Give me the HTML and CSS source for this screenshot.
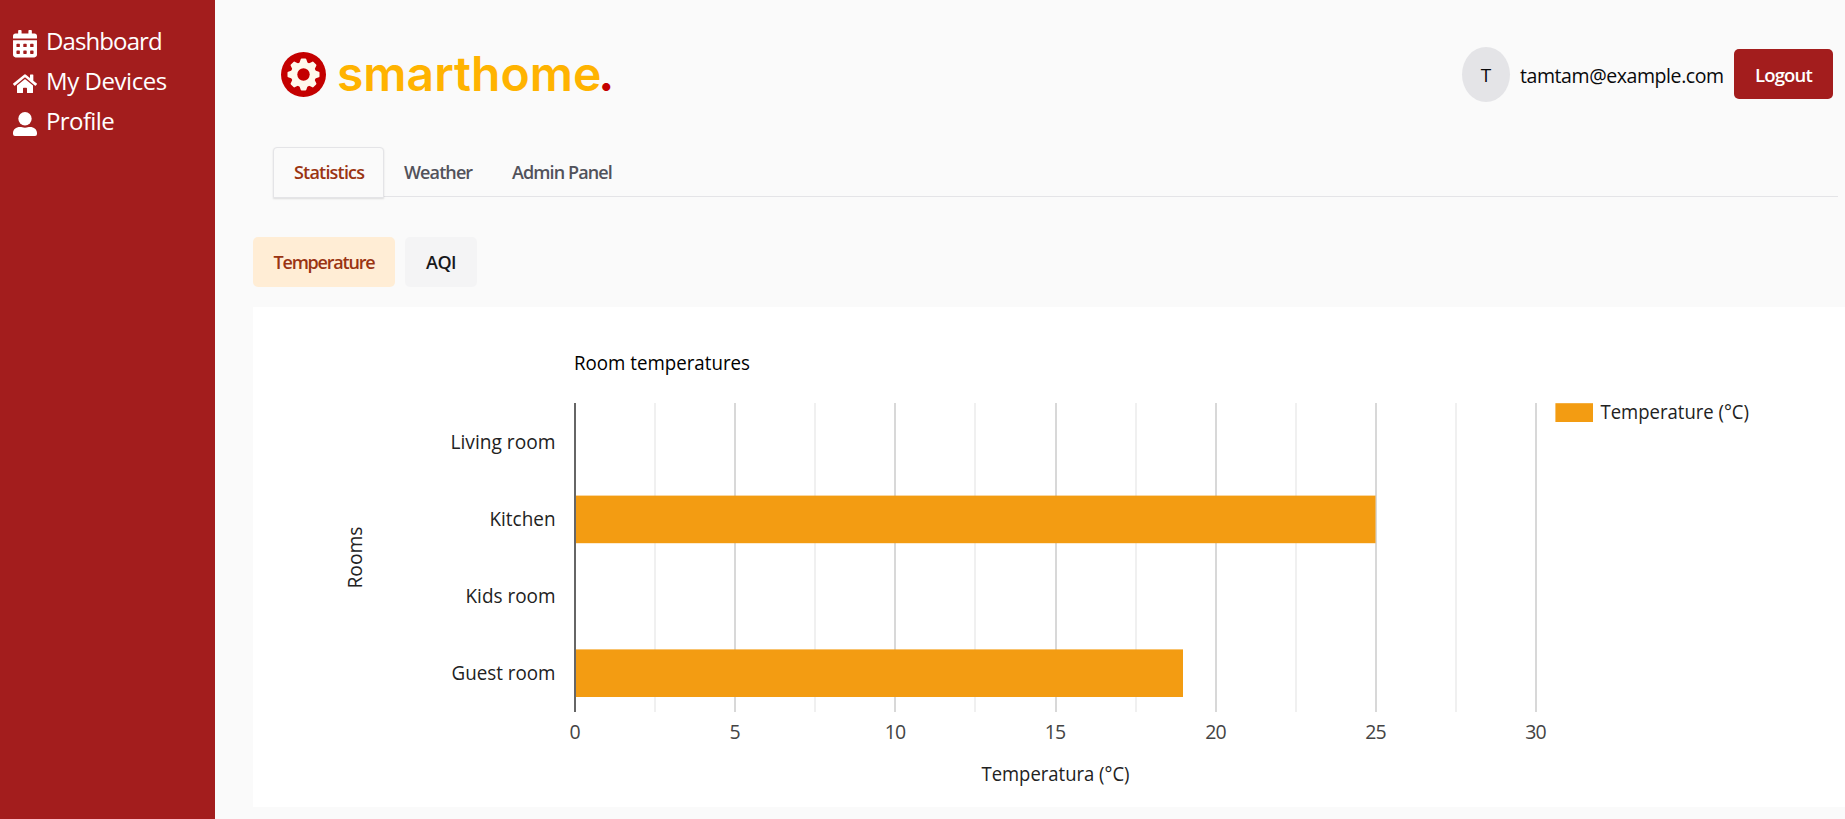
FILE: index.html
```html
<!DOCTYPE html>
<html lang="en">
<head>
<meta charset="utf-8">
<title>smarthome.</title>
<link rel="stylesheet" href="styles.css">
</head>
<body>
<div class="app">
  <nav class="sidebar">
    <a class="nav-item"><svg class="icon icon-calendar" viewBox="0 0 448 512"><path fill-rule="evenodd" d="M0 464c0 26.500 21.500 48 48 48h352c26.500 0 48-21.500 48-48V192H0zM320 268a12 12 0 0 1 12-12h40a12 12 0 0 1 12 12v40a12 12 0 0 1-12 12h-40a12 12 0 0 1-12-12zM320 396a12 12 0 0 1 12-12h40a12 12 0 0 1 12 12v40a12 12 0 0 1-12 12h-40a12 12 0 0 1-12-12zM192 268a12 12 0 0 1 12-12h40a12 12 0 0 1 12 12v40a12 12 0 0 1-12 12h-40a12 12 0 0 1-12-12zM192 396a12 12 0 0 1 12-12h40a12 12 0 0 1 12 12v40a12 12 0 0 1-12 12h-40a12 12 0 0 1-12-12zM64 268a12 12 0 0 1 12-12h40a12 12 0 0 1 12 12v40a12 12 0 0 1-12 12H76a12 12 0 0 1-12-12zM64 396a12 12 0 0 1 12-12h40a12 12 0 0 1 12 12v40a12 12 0 0 1-12 12H76a12 12 0 0 1-12-12zM400 64h-48V16a16 16 0 0 0-16-16h-32a16 16 0 0 0-16 16v48H160V16a16 16 0 0 0-16-16h-32a16 16 0 0 0-16 16v48H48A48 48 0 0 0 0 112v48h448v-48a48 48 0 0 0-48-48z"/></svg><span class="nav-dashboard">Dashboard</span></a>
    <a class="nav-item"><svg class="icon icon-home" viewBox="0 32 576 448"><path d="M280.370 148.260L96 300.110V464a16 16 0 0 0 16 16l112.060-.290a16 16 0 0 0 15.920-16V368a16 16 0 0 1 16-16h64a16 16 0 0 1 16 16v95.640a16 16 0 0 0 16 16.050L464 480a16 16 0 0 0 16-16V300L295.670 148.260a12.190 12.190 0 0 0-15.300 0zM571.600 251.470L488 182.560V44.050a12 12 0 0 0-12-12h-56a12 12 0 0 0-12 12v72.610L318.470 43a48 48 0 0 0-61 0L4.340 251.470a12 12 0 0 0-1.600 16.900l25.500 31A12 12 0 0 0 45.150 301l235.220-193.740a12.190 12.190 0 0 1 15.300 0L530.900 301a12 12 0 0 0 16.900-1.600l25.500-31a12 12 0 0 0-1.700-16.930z"/></svg><span class="nav-devices">My Devices</span></a>
    <a class="nav-item"><svg class="icon icon-user" viewBox="0 0 24 24"><circle cx="12" cy="6.700" r="6.700"/><path d="M7 15c1.800 0 2.500.7 5 .7s3.200-.7 5-.7c4 0 7 2.600 7 6v1a2 2 0 0 1-2 2H2a2 2 0 0 1-2-2v-1c0-3.400 3-6 7-6z"/></svg><span class="nav-profile">Profile</span></a>
  </nav>
  <main class="main">
    <header class="header">
      <div class="logo">
        <svg class="logo-mark" viewBox="-22.500 -22.500 45 45"><circle class="disc" r="22.500"/><g class="gear"><circle r="12.600"/><path id="tooth" d="M-4.300-11L-2.800-15.300Q-2.600-16-1.800-16H1.800Q2.600-16 2.800-15.300L4.300-11z"/><use href="#tooth" transform="rotate(45)"/><use href="#tooth" transform="rotate(90)"/><use href="#tooth" transform="rotate(135)"/><use href="#tooth" transform="rotate(180)"/><use href="#tooth" transform="rotate(225)"/><use href="#tooth" transform="rotate(270)"/><use href="#tooth" transform="rotate(315)"/></g><circle class="disc" r="6.200"/></svg>
        <span class="logo-text">smarthome</span><span class="logo-dot">.</span>
      </div>
      <div class="account">
        <span class="avatar">T</span>
        <span class="email">tamtam@example.com</span>
        <button class="logout">Logout</button>
      </div>
    </header>
    <div class="tabs">
      <a class="tab tab-active">Statistics</a>
      <a class="tab tab-weather">Weather</a>
      <a class="tab tab-admin">Admin Panel</a>
    </div>
    <div class="pills">
      <button class="pill pill-active">Temperature</button>
      <button class="pill pill-aqi">AQI</button>
    </div>
    <section class="card">
      <svg class="chart" viewBox="253 307 1592 500">
        <text class="title" x="574" y="370" textLength="176" lengthAdjust="spacingAndGlyphs">Room temperatures</text>
        <g class="minor">
          <path d="M655 403V712M815 403V712M975 403V712M1136 403V712M1296 403V712M1456 403V712"/>
        </g>
        <g class="major">
          <path d="M735 403V712M895 403V712M1056 403V712M1216 403V712M1376 403V712M1536 403V712"/>
        </g>
        <rect class="bar" x="576" y="495.600" width="799.500" height="47.600"/>
        <rect class="bar" x="576" y="649.400" width="607" height="47.600"/>
        <path class="axis" d="M575 403V712"/>
        <g class="label" text-anchor="end">
          <text x="555.500" y="449" textLength="105" lengthAdjust="spacingAndGlyphs">Living room</text>
          <text x="555.500" y="526" textLength="66" lengthAdjust="spacingAndGlyphs">Kitchen</text>
          <text x="555.500" y="603" textLength="90" lengthAdjust="spacingAndGlyphs">Kids room</text>
          <text x="555.500" y="680" textLength="104" lengthAdjust="spacingAndGlyphs">Guest room</text>
        </g>
        <g class="tick" text-anchor="middle">
          <text x="575" y="739">0</text>
          <text x="735" y="739">5</text>
          <text x="895.500" y="739" textLength="21.500">10</text>
          <text x="1055.500" y="739" textLength="21.500">15</text>
          <text x="1216" y="739" textLength="21.500">20</text>
          <text x="1376" y="739" textLength="21.500">25</text>
          <text x="1536" y="739" textLength="21.500">30</text>
        </g>
        <g class="label">
          <text x="981.500" y="781" textLength="148" lengthAdjust="spacingAndGlyphs">Temperatura (°C)</text>
          <text transform="translate(362 588.500) rotate(-90)" textLength="62" lengthAdjust="spacingAndGlyphs">Rooms</text>
          <text x="1600.500" y="419" textLength="148.500" lengthAdjust="spacingAndGlyphs">Temperature (°C)</text>
        </g>
        <rect class="bar" x="1555.400" y="403.200" width="37.600" height="18.800"/>
      </svg>
    </section>
  </main>
</div>
</body>
</html>
```
FILE: styles.css
```css
* { box-sizing: border-box; }
body {
  margin: 0;
  overflow: hidden;
  background: #fafafa;
  font-family: "Open Sans", "Noto Sans", sans-serif;
  font-size: 19px;
  color: #09090b;
}
button { border: 0; font: inherit; }
.app { display: flex; height: 819px; }

.sidebar {
  width: 215px;
  flex: none;
  padding: 21px 13px;
  background: #a31d1d;
  color: #fff;
}
.nav-item { display: flex; align-items: center; gap: 9px; height: 40px; font-size: 24px; line-height: 40px; }
.nav-item span { white-space: nowrap; }
.icon { width: 24px; flex: none; fill: #fff; }
.icon-calendar { height: 27.400px; margin-top: 6px; }
.icon-home { height: 19.500px; margin-top: 6px; }
.icon-user { height: 24px; margin-top: 6px; }
.nav-dashboard { letter-spacing: -0.900px; }
.nav-devices { letter-spacing: -0.450px; }
.nav-profile { letter-spacing: -0.600px; }

.main { flex: 1; min-width: 0; display: flex; flex-direction: column; }
.header {
  display: flex;
  justify-content: space-between;
  align-items: center;
  height: 147px;
  padding: 2px 12px 0 66px;
}
.logo { display: flex; align-items: center; height: 60px; margin-bottom: 1px; }
.logo-mark { width: 45px; height: 45px; margin-right: 11px; }
.disc { fill: #c40000; }
.gear { fill: #fff9ec; }
.logo-text, .logo-dot { font: 600 48px/60px Inter, sans-serif; }
.logo-text { color: #ffb300; }
.logo-dot { margin-left: -3px; color: #c40000; font-weight: 700; }
.account { display: flex; align-items: center; }
.avatar {
  display: flex;
  align-items: center;
  justify-content: center;
  width: 48px;
  height: 55px;
  margin-right: 10px;
  border-radius: 50%;
  background: #e4e4e7;
}
.email { width: 214px; padding-top: 1px; font-size: 19.500px; letter-spacing: -0.420px; white-space: nowrap; }
.logout {
  width: 99px;
  height: 50px;
  margin-bottom: 2px;
  padding: 2px 0 0;
  border-radius: 5px;
  background: #a31d1d;
  color: #fff;
  font-size: 18.500px;
  font-weight: 600;
  letter-spacing: -0.800px;
}

.tabs {
  display: flex;
  height: 50px;
  margin: 0 7px 40px 58px;
  border-bottom: 1px solid #e4e4e7;
}
.tab {
  padding: 0 20px;
  font-weight: 600;
  font-size: 18px;
  letter-spacing: -0.900px;
  line-height: 50px;
  color: #52525b;
  white-space: nowrap;
}
.tab-active {
  width: 111px;
  height: 51px;
  border: 1px solid #e4e4e7;
  border-radius: 4px 4px 0 0;
  background: #fafafa;
  color: #9a3412;
  letter-spacing: -0.800px;
  line-height: 48px;
  box-shadow: 0 1px 2px rgba(0, 0, 0, .12);
}
.tab-weather { width: 108px; }

.pills { display: flex; gap: 10px; margin: 0 0 20px 38px; }
.pill {
  height: 50px;
  padding: 0;
  border-radius: 5px;
  background: #f4f4f5;
  color: #18181b;
  font-size: 18px;
  font-weight: 600;
  letter-spacing: -0.600px;
  width: 72px;
}
.pill-active { width: 142px; background: #ffedd5; color: #9a3412; letter-spacing: -1.200px; }

.card { height: 500px; margin-left: 38px; background: #fff; }
.chart { display: block; width: 1592px; height: 500px; }
.chart text { font-size: 19.500px; }
.title { fill: #000; }
.label { fill: #222; }
.tick { fill: #444; }
.minor path { stroke: #ebebeb; stroke-width: 1.500; }
.major path { stroke: #ccc; stroke-width: 1.500; }
.axis { stroke: #333; stroke-width: 1.500; }
.bar { fill: #f39c12; }
```
